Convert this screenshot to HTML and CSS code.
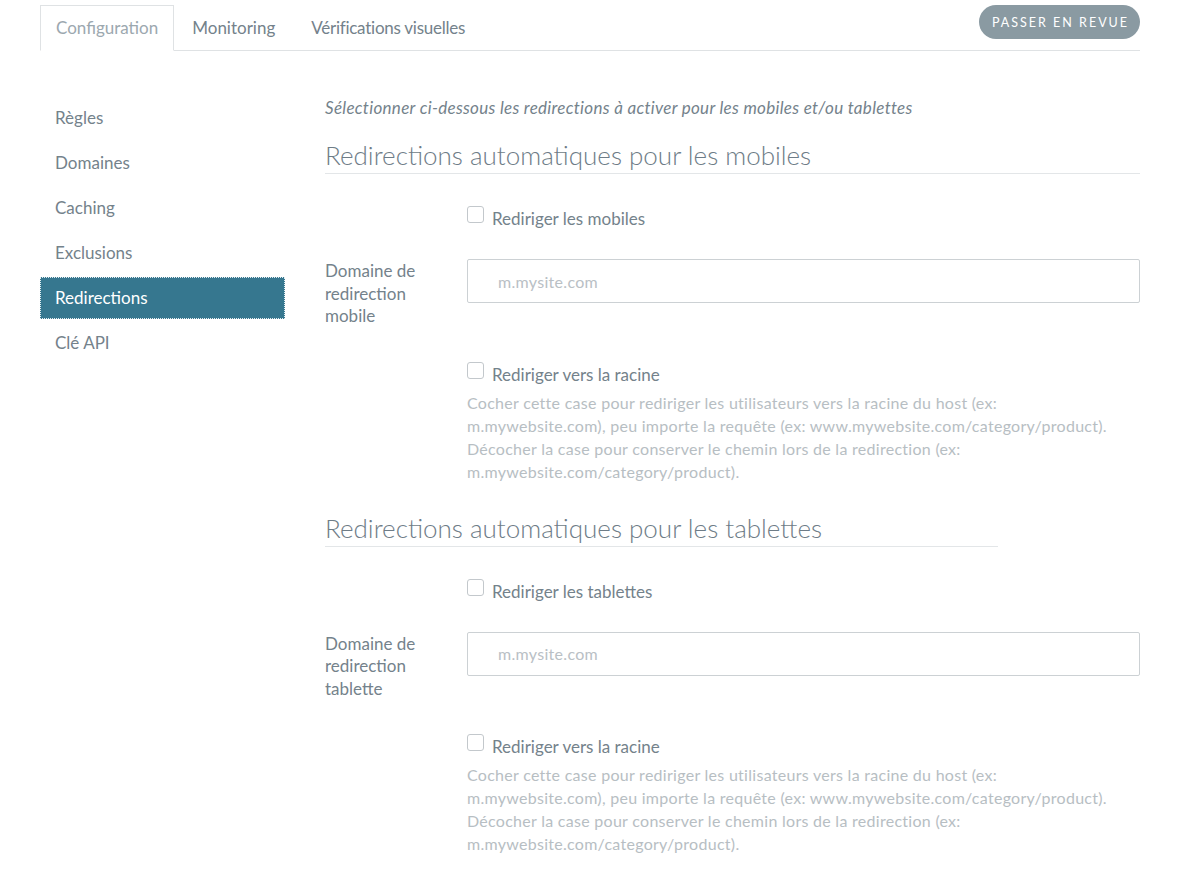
FILE: index.html
```html
<!DOCTYPE html>
<html lang="fr">
<head>
<meta charset="utf-8">
<title>Redirections</title>
<link rel="stylesheet" href="styles.css">
</head>
<body>
<div class="page">
  <div class="topbar">
    <nav class="tabs">
      <a class="tab tab-active">Configuration</a>
      <a class="tab">Monitoring</a>
      <a class="tab tab-narrow">Vérifications visuelles</a>
    </nav>
    <button class="review-btn">PASSER EN REVUE</button>
  </div>

  <div class="main">
    <aside class="sidebar">
      <a class="side-item">Règles</a>
      <a class="side-item">Domaines</a>
      <a class="side-item">Caching</a>
      <a class="side-item">Exclusions</a>
      <a class="side-item side-active">Redirections</a>
      <a class="side-item">Clé API</a>
    </aside>

    <section class="content">
      <p class="intro">Sélectionner ci-dessous les redirections à activer pour les mobiles et/ou tablettes</p>

      <h2 class="section-title">Redirections automatiques pour les mobiles</h2>
      <div class="row row-check">
        <div class="row-label"></div>
        <label class="check"><span class="box"></span>Rediriger les mobiles</label>
      </div>
      <div class="row row-input">
        <div class="row-label">Domaine de redirection mobile</div>
        <div class="field"><input class="text-input" type="text" placeholder="m.mysite.com"></div>
      </div>
      <div class="row row-check2">
        <div class="row-label"></div>
        <div class="field">
          <label class="check"><span class="box"></span>Rediriger vers la racine</label>
          <p class="help">Cocher cette case pour rediriger les utilisateurs vers la racine du host (ex: m.mywebsite.com), peu importe la requête (ex: www.mywebsite.com/category/product). Décocher la case pour conserver le chemin lors de la redirection (ex: m.mywebsite.com/category/product).</p>
        </div>
      </div>

      <h2 class="section-title section-title-narrow">Redirections automatiques pour les tablettes</h2>
      <div class="row row-check">
        <div class="row-label"></div>
        <label class="check"><span class="box"></span>Rediriger les tablettes</label>
      </div>
      <div class="row row-input">
        <div class="row-label">Domaine de redirection tablette</div>
        <div class="field"><input class="text-input" type="text" placeholder="m.mysite.com"></div>
      </div>
      <div class="row row-check2">
        <div class="row-label"></div>
        <div class="field">
          <label class="check"><span class="box"></span>Rediriger vers la racine</label>
          <p class="help">Cocher cette case pour rediriger les utilisateurs vers la racine du host (ex: m.mywebsite.com), peu importe la requête (ex: www.mywebsite.com/category/product). Décocher la case pour conserver le chemin lors de la redirection (ex: m.mywebsite.com/category/product).</p>
        </div>
      </div>
    </section>
  </div>
</div>
</body>
</html>
```

FILE: styles.css
```css
* { box-sizing: border-box; }
html, body { margin: 0; padding: 0; background: #fff; }
body {
  font-family: Lato, "Open Sans", sans-serif;
  font-size: 16px;
  color: #74828b;
}
.page { padding: 5px 40px 0; }

.topbar {
  display: flex;
  align-items: flex-start;
  border-bottom: 1px solid #dfe2e4;
  height: 46px;
}
.tabs { display: flex; }
.tab {
  display: block;
  padding: 0 15px;
  height: 45px;
  line-height: 44px;
  color: #74828b;
  border: 1px solid transparent;
  font-size: 17px;
}
.tab + .tab { padding: 0 17px; }
.tab-narrow { letter-spacing: -0.25px; }
.tab-active {
  border-color: #dfe2e4;
  border-bottom-color: #fff;
  background: #fff;
  color: #9ca8af;
  height: 46px;
}
.review-btn {
  margin-left: auto;
  height: 34px;
  width: 161px;
  padding: 0;
  border: none;
  border-radius: 17px;
  background: #8a9aa2;
  color: #fff;
  font-family: Lato, sans-serif;
  font-size: 12.5px;
  letter-spacing: 2px;
  font-weight: 400;
  text-indent: 2px;
}

.main { display: flex; margin-top: 46px; }
.sidebar { width: 245px; flex-shrink: 0; display: flex; flex-direction: column; }
.side-item {
  display: block;
  height: 42px;
  line-height: 40px;
  margin-bottom: 3px;
  padding: 0 14px;
  border: 1px dotted transparent;
  color: #74828b;
  font-size: 17px;
}
.side-active {
  background: #36778f;
  color: #fff;
  border-color: #e3eef2;
}

.content { flex: 1; margin-left: 40px; }
.intro {
  margin: 0;
  line-height: 22px;
  font-style: italic;
  font-size: 17px;
  letter-spacing: 0.3px;
  color: #74828b;
}
.section-title {
  margin: 19px 0 0;
  font-size: 26px;
  line-height: 35px;
  font-weight: 300;
  color: #6e7c87;
  border-bottom: 1px solid #e3e6e8;
}
.section-title-narrow { width: 673px; margin-top: 28px; }

.row { display: flex; align-items: flex-start; }
.row-label {
  width: 142px;
  flex-shrink: 0;
  padding-right: 20px;
  line-height: 22.5px;
  font-size: 17px;
  color: #74828b;
}
.field { flex: 1; }
.row-check { margin-top: 33px; }
.row-input { margin-top: 28px; }
.row-input .row-label { padding-top: 1px; }
.row-check2 { margin-top: 35px; }

.check {
  display: flex;
  align-items: flex-start;
  line-height: 24px;
  font-size: 17px;
  color: #74828b;
}
.box {
  width: 17px;
  height: 17px;
  margin-top: -1px;
  border: 1px solid #c3c8cc;
  border-radius: 3px;
  margin-right: 8px;
  background: #fff;
}
.text-input {
  width: 100%;
  height: 44px;
  border: 1px solid #ccd1d4;
  border-radius: 2px;
  padding: 0 30px;
  font-family: Lato, sans-serif;
  font-size: 16px;
  letter-spacing: 0.3px;
  color: #74828b;
}
.text-input::placeholder { color: #b9c0c5; }
.help {
  margin: 4px 0 0;
  line-height: 23px;
  font-size: 16px;
  letter-spacing: 0.28px;
  color: #b7bec3;
}
```
